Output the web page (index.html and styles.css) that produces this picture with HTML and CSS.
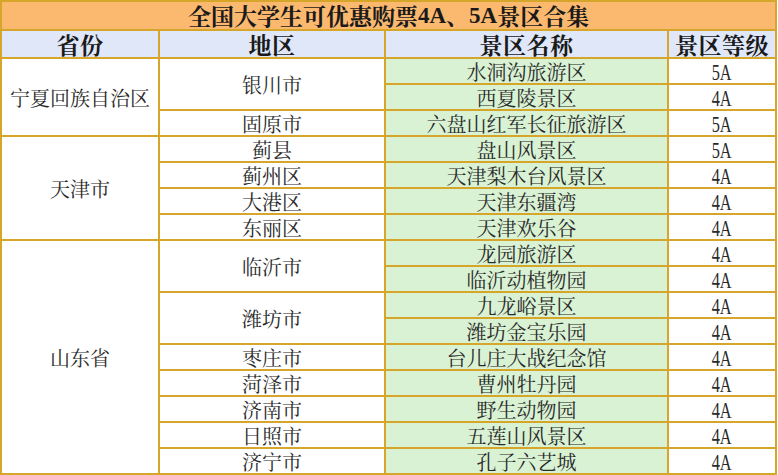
FILE: index.html
```html
<!DOCTYPE html>
<html lang="zh-CN">
<head>
<meta charset="utf-8">
<title>全国大学生可优惠购票4A、5A景区合集</title>
<link rel="stylesheet" href="styles.css">
</head>
<body>
<div class="sheet">
  <div class="cell title">全国大学生可优惠购票<span class="lat">4A</span>、<span class="lat">5A</span>景区合集</div>
  <div class="cell head p">省份</div><div class="cell head c">地区</div><div class="cell head s">景区名称</div><div class="cell head l">景区等级</div>

  <div class="cell p r3">宁夏回族自治区</div><div class="cell c r2">银川市</div><div class="cell s spot">水洞沟旅游区</div><div class="cell l"><span class="num">5A</span></div>
  <div class="cell s spot">西夏陵景区</div><div class="cell l"><span class="num">4A</span></div>
  <div class="cell c">固原市</div><div class="cell s spot">六盘山红军长征旅游区</div><div class="cell l"><span class="num">5A</span></div>

  <div class="cell p r4">天津市</div><div class="cell c">蓟县</div><div class="cell s spot">盘山风景区</div><div class="cell l"><span class="num">5A</span></div>
  <div class="cell c">蓟州区</div><div class="cell s spot">天津梨木台风景区</div><div class="cell l"><span class="num">4A</span></div>
  <div class="cell c">大港区</div><div class="cell s spot">天津东疆湾</div><div class="cell l"><span class="num">4A</span></div>
  <div class="cell c">东丽区</div><div class="cell s spot">天津欢乐谷</div><div class="cell l"><span class="num">4A</span></div>

  <div class="cell p r9">山东省</div><div class="cell c r2">临沂市</div><div class="cell s spot">龙园旅游区</div><div class="cell l"><span class="num">4A</span></div>
  <div class="cell s spot">临沂动植物园</div><div class="cell l"><span class="num">4A</span></div>
  <div class="cell c r2">潍坊市</div><div class="cell s spot">九龙峪景区</div><div class="cell l"><span class="num">4A</span></div>
  <div class="cell s spot">潍坊金宝乐园</div><div class="cell l"><span class="num">4A</span></div>
  <div class="cell c">枣庄市</div><div class="cell s spot">台儿庄大战纪念馆</div><div class="cell l"><span class="num">4A</span></div>
  <div class="cell c">菏泽市</div><div class="cell s spot">曹州牡丹园</div><div class="cell l"><span class="num">4A</span></div>
  <div class="cell c">济南市</div><div class="cell s spot">野生动物园</div><div class="cell l"><span class="num">4A</span></div>
  <div class="cell c">日照市</div><div class="cell s spot">五莲山风景区</div><div class="cell l"><span class="num">4A</span></div>
  <div class="cell c">济宁市</div><div class="cell s spot">孔子六艺城</div><div class="cell l"><span class="num">4A</span></div>
</div>
</body>
</html>
```
FILE: styles.css
```css
html, body {
  margin: 0;
  padding: 0;
  background: #ffffff;
}
.sheet {
  width: 777px;
  box-sizing: border-box;
  display: grid;
  grid-template-columns: 156px 224px 281px 106px;
  grid-template-rows: 27px 26px repeat(16, 24px);
  gap: 2px;
  padding: 2px;
  background: #d6a62a;
  font-family: "Noto Serif CJK SC", "Liberation Serif", "Noto Sans CJK SC", serif;
  color: #2a2a2a;
}
.cell {
  background: #ffffff;
  display: flex;
  align-items: center;
  justify-content: center;
  font-size: 20px;
  line-height: 20px;
  padding-top: 2px;
  box-sizing: border-box;
  white-space: nowrap;
}
.p { grid-column: 1; }
.c { grid-column: 2; }
.s { grid-column: 3; }
.l { grid-column: 4; }
.r2 { grid-row: span 2; }
.r3 { grid-row: span 3; }
.r4 { grid-row: span 4; }
.r9 { grid-row: span 9; }
.title {
  grid-column: 1 / span 4;
  background: #fbb86f;
  font-size: 23px;
  line-height: 24px;
  font-weight: bold;
  color: #1a1a1a;
  padding-top: 1px;
}
.head {
  background: #dfe7f8;
  font-size: 23px;
  line-height: 24px;
  font-weight: bold;
  color: #1a1a1a;
  letter-spacing: 0.5px;
  padding-top: 1px;
}
.lat {
  font-family: "Liberation Serif", serif;
  font-weight: bold;
}
.spot {
  background: #d9f2d4;
}
.num {
  display: inline-block;
  font-family: "Liberation Serif", serif;
  font-size: 24px;
  line-height: 20px;
  transform: scaleX(0.68);
}
```
